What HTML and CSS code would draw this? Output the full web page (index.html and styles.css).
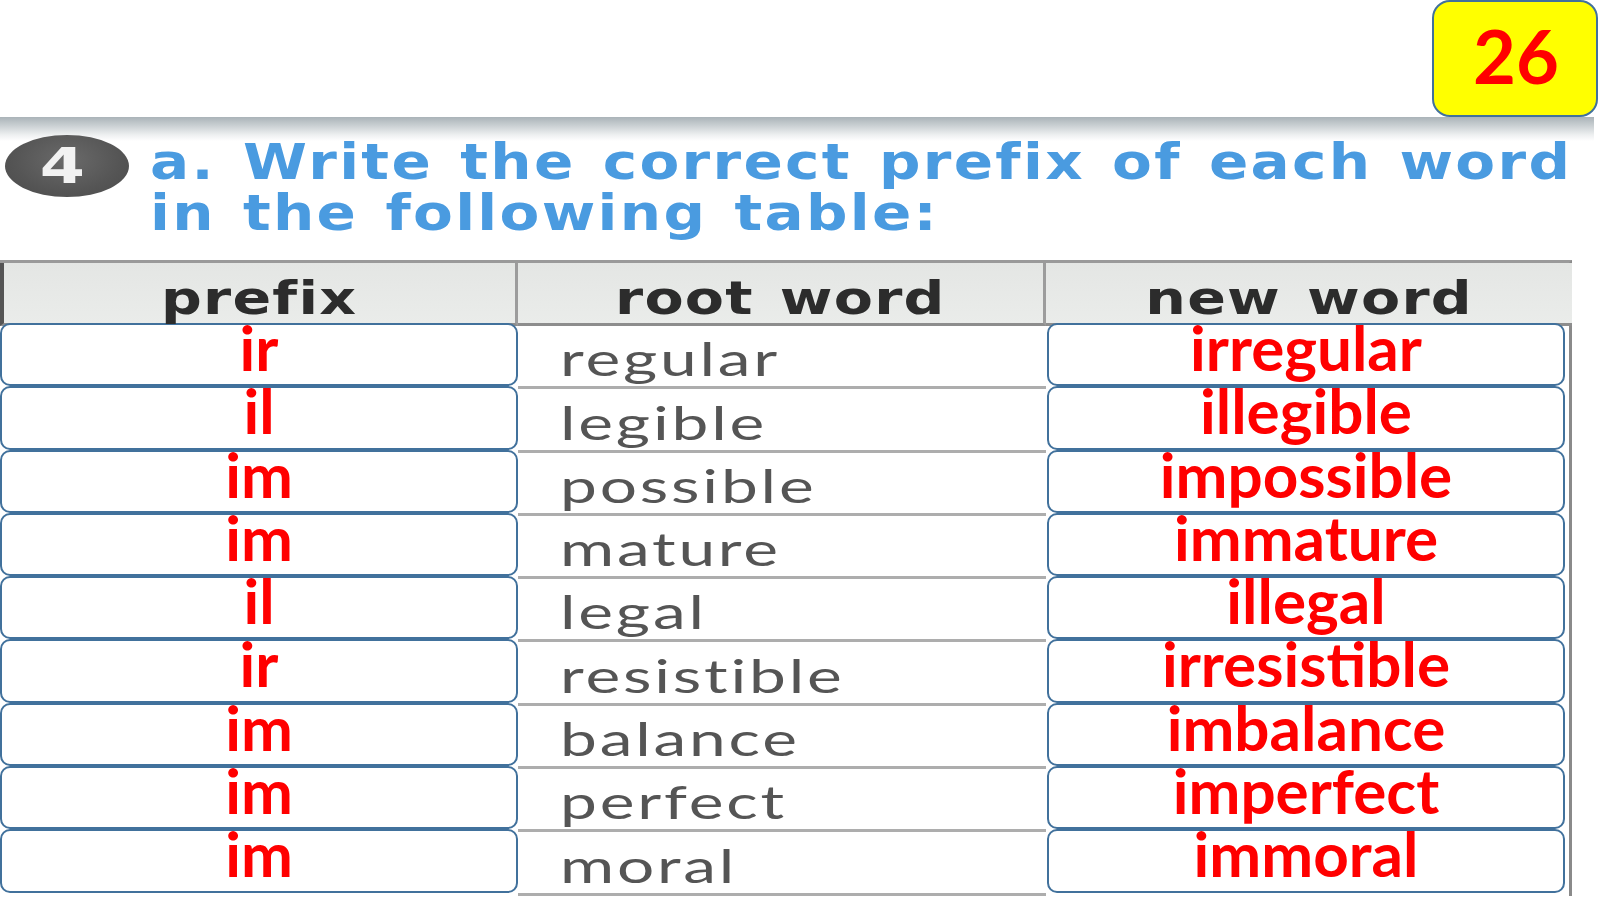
FILE: index.html
```html
<!DOCTYPE html>
<html>
<head>
<meta charset="utf-8">
<link rel="stylesheet" href="styles.css">
</head>
<body>
<div class="page">
  <div class="top">
    <div class="badge">26</div>
  </div>
  <div class="band"></div>
  <div class="heading">
    <div class="num"><span>4</span></div>
    <div class="title"><span>a. Write the correct prefix of each word</span><span>in the following table:</span></div>
  </div>
  <div class="table">
    <div class="th th1"><span>prefix</span></div>
    <div class="th th2"><span>root word</span></div>
    <div class="th th3"><span>new word</span></div>

    <div class="ans left"><span>ir</span></div><div class="root"><span>regular</span></div><div class="ans right"><span>irregular</span></div>
    <div class="ans left"><span>il</span></div><div class="root"><span>legible</span></div><div class="ans right"><span>illegible</span></div>
    <div class="ans left"><span>im</span></div><div class="root"><span>possible</span></div><div class="ans right"><span>impossible</span></div>
    <div class="ans left"><span>im</span></div><div class="root"><span>mature</span></div><div class="ans right"><span>immature</span></div>
    <div class="ans left"><span>il</span></div><div class="root"><span>legal</span></div><div class="ans right"><span>illegal</span></div>
    <div class="ans left"><span>ir</span></div><div class="root"><span>resistible</span></div><div class="ans right"><span>irresistible</span></div>
    <div class="ans left"><span>im</span></div><div class="root"><span>balance</span></div><div class="ans right"><span>imbalance</span></div>
    <div class="ans left"><span>im</span></div><div class="root"><span>perfect</span></div><div class="ans right"><span>imperfect</span></div>
    <div class="ans left"><span>im</span></div><div class="root"><span>moral</span></div><div class="ans right"><span>immoral</span></div>
  </div>
</div>
</body>
</html>
```
FILE: styles.css
```css
* { box-sizing: border-box; }
html, body { margin: 0; padding: 0; background: #fff; }
.page {
  width: 1600px;
  height: 900px;
  overflow: hidden;
}
.top {
  height: 117px;
  display: flex;
  justify-content: flex-end;
  padding-right: 2px;
}
.badge {
  width: 166px;
  height: 117px;
  background: #ffff00;
  border: 2px solid #41719c;
  border-radius: 18px;
  color: #ff0000;
  font-family: Lato, "Liberation Sans", sans-serif;
  font-weight: 700;
  font-size: 74px;
  display: flex;
  align-items: center;
  justify-content: center;
  padding-bottom: 6px;
  padding-left: 2px;
}
.band {
  width: 1594px;
  height: 24px;
  background: linear-gradient(to bottom, #aab3b8 0%, #c9cfd2 35%, #eef0f1 75%, #ffffff 100%);
}
.heading {
  height: 125px;
  display: flex;
  align-items: flex-start;
  margin-top: -6px;
}
.num {
  width: 124px;
  height: 62px;
  margin-left: 5px;
  border-radius: 50%;
  background: radial-gradient(ellipse at 50% 40%, #6a6a6a 0%, #555 60%, #4a4a4a 100%);
  color: #f2f2f2;
  font-family: "DejaVu Sans", sans-serif;
  font-weight: 700;
  font-size: 50px;
  display: flex;
  align-items: center;
  justify-content: center;
  padding-right: 10px;
  flex: none;
}
.num span {
  display: inline-block;
  transform: scaleX(1.3);
}
.title {
  margin-left: 21px;
  margin-top: 2px;
  color: #4a9be0;
  font-family: "DejaVu Sans", sans-serif;
  font-weight: 700;
  font-size: 50px;
  line-height: 51px;
  letter-spacing: 2px;
  word-spacing: 4px;
  white-space: nowrap;
  display: flex;
  flex-direction: column;
  align-items: flex-start;
}
.title span {
  display: inline-block;
  transform: scaleX(1.16);
  transform-origin: left center;
}
.table {
  width: 1572px;
  display: grid;
  grid-template-columns: 518px 528px 526px;
  grid-template-rows: 63px repeat(9, 63.3px);
  border-top: 3px solid #9a9a9a;
  border-right: 3px solid #8a8a8a;
}
.th {
  background: linear-gradient(to bottom, #e4e6e4, #eaecea);
  border-right: 3px solid #9c9c9c;
  border-bottom: 3px solid #8d8d8d;
  color: #2c2c2c;
  font-family: "DejaVu Sans", sans-serif;
  font-weight: 700;
  font-size: 46px;
  letter-spacing: 1px;
  word-spacing: 4px;
  display: flex;
  align-items: flex-end;
  justify-content: center;
  line-height: 1;
  padding-bottom: 2px;
}
.th span {
  display: inline-block;
  transform: scaleX(1.24);
}
.th1 { border-left: 4px solid #555; }
.th3 { border-right: none; }
.root {
  border-bottom: 3px solid #adadad;
  color: #555;
  font-family: "Lato", "Liberation Sans", sans-serif;
  font-size: 47px;
  letter-spacing: 2px;
  display: flex;
  align-items: flex-end;
  padding-left: 42px;
  padding-bottom: 4px;
  line-height: 1;
}
.root span {
  display: inline-block;
  transform: scaleX(1.4);
  transform-origin: left center;
}
.ans {
  background: #fff;
  border: 2px solid #41719c;
  border-radius: 10px;
  color: #ff0000;
  font-family: Lato, "Liberation Sans", sans-serif;
  font-weight: 700;
  font-size: 62px;
  display: flex;
  justify-content: center;
  align-items: flex-start;
  line-height: 0.9;
  margin-top: -3px;
  margin-bottom: 3px;
}
.ans span { margin-top: -5px; }
.left { width: 518px; }
.right { width: 518px; margin-left: 1px; }
```
